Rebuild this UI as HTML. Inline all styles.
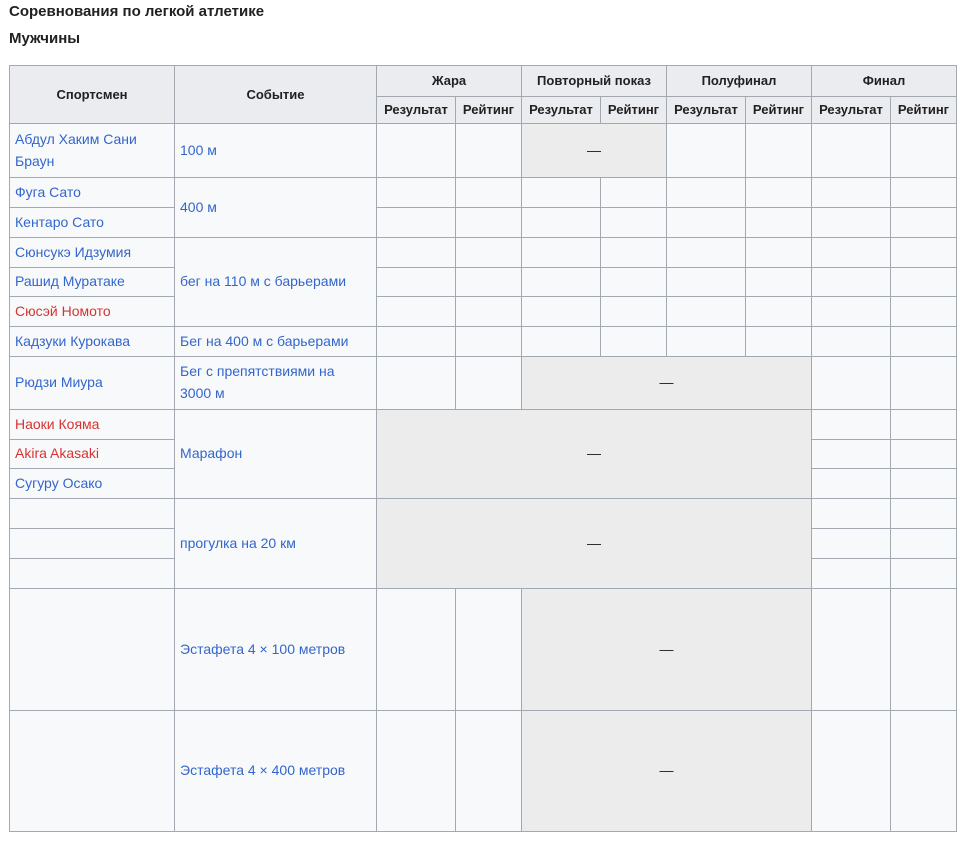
<!DOCTYPE html>
<html><head><meta charset="utf-8"><style>
body{margin:0;background:#fff;width:966px;height:846px;position:relative;font-family:"Liberation Sans",Arial,sans-serif;color:#202122;overflow:hidden}
.t{position:absolute;left:9px;font-weight:bold;font-size:15px}
.c{position:absolute;box-sizing:border-box;border:1px solid #a2a9b1;background:#f8f9fa;display:flex;align-items:center;padding:0 10px 2px 5px;font-size:14px;line-height:22px;color:#3366cc}
.h{background:#eaecf0;color:#202122;font-weight:bold;font-size:13px;justify-content:center;padding:0}
.g{background:#ececec;color:#202122;justify-content:center;padding:0 0 2px 0}
.r{color:#d73333}
</style></head><body>
<div class="t" style="top:3px">Соревнования по легкой атлетике</div>
<div class="t" style="top:30px">Мужчины</div>

<div class="c h" style="left:9px;top:65px;width:166px;height:59px">Спортсмен</div>
<div class="c h" style="left:174px;top:65px;width:203px;height:59px">Событие</div>
<div class="c h" style="left:376px;top:65px;width:146px;height:32px">Жара</div>
<div class="c h" style="left:521px;top:65px;width:146px;height:32px">Повторный показ</div>
<div class="c h" style="left:666px;top:65px;width:146px;height:32px">Полуфинал</div>
<div class="c h" style="left:811px;top:65px;width:146px;height:32px">Финал</div>
<div class="c h" style="left:376px;top:96px;width:80px;height:28px">Результат</div>
<div class="c h" style="left:455px;top:96px;width:67px;height:28px">Рейтинг</div>
<div class="c h" style="left:521px;top:96px;width:80px;height:28px">Результат</div>
<div class="c h" style="left:600px;top:96px;width:67px;height:28px">Рейтинг</div>
<div class="c h" style="left:666px;top:96px;width:80px;height:28px">Результат</div>
<div class="c h" style="left:745px;top:96px;width:67px;height:28px">Рейтинг</div>
<div class="c h" style="left:811px;top:96px;width:80px;height:28px">Результат</div>
<div class="c h" style="left:890px;top:96px;width:67px;height:28px">Рейтинг</div>

<div class="c" style="left:9px;top:123px;width:166px;height:55px">Абдул Хаким Сани Браун</div>
<div class="c" style="left:174px;top:123px;width:203px;height:55px">100 м</div>
<div class="c" style="left:376px;top:123px;width:80px;height:55px"></div>
<div class="c" style="left:455px;top:123px;width:67px;height:55px"></div>
<div class="c g" style="left:521px;top:123px;width:146px;height:55px">—</div>
<div class="c" style="left:666px;top:123px;width:80px;height:55px"></div>
<div class="c" style="left:745px;top:123px;width:67px;height:55px"></div>
<div class="c" style="left:811px;top:123px;width:80px;height:55px"></div>
<div class="c" style="left:890px;top:123px;width:67px;height:55px"></div>

<div class="c" style="left:9px;top:177px;width:166px;height:31px">Фуга Сато</div>
<div class="c" style="left:9px;top:207px;width:166px;height:31px">Кентаро Сато</div>
<div class="c" style="left:174px;top:177px;width:203px;height:61px">400 м</div>

<div class="c" style="left:9px;top:237px;width:166px;height:31px">Сюнсукэ Идзумия</div>
<div class="c" style="left:9px;top:267px;width:166px;height:30px">Рашид Муратаке</div>
<div class="c r" style="left:9px;top:296px;width:166px;height:31px">Сюсэй Номото</div>
<div class="c" style="left:174px;top:237px;width:203px;height:90px">бег на 110 м с барьерами</div>
<div class="c" style="left:9px;top:326px;width:166px;height:31px">Кадзуки Курокава</div>
<div class="c" style="left:174px;top:326px;width:203px;height:31px;padding-right:0">Бег на 400 м с барьерами</div>

<div class="c" style="left:376px;top:177px;width:80px;height:31px"></div><div class="c" style="left:455px;top:177px;width:67px;height:31px"></div><div class="c" style="left:521px;top:177px;width:80px;height:31px"></div><div class="c" style="left:600px;top:177px;width:67px;height:31px"></div><div class="c" style="left:666px;top:177px;width:80px;height:31px"></div><div class="c" style="left:745px;top:177px;width:67px;height:31px"></div><div class="c" style="left:811px;top:177px;width:80px;height:31px"></div><div class="c" style="left:890px;top:177px;width:67px;height:31px"></div>
<div class="c" style="left:376px;top:207px;width:80px;height:31px"></div><div class="c" style="left:455px;top:207px;width:67px;height:31px"></div><div class="c" style="left:521px;top:207px;width:80px;height:31px"></div><div class="c" style="left:600px;top:207px;width:67px;height:31px"></div><div class="c" style="left:666px;top:207px;width:80px;height:31px"></div><div class="c" style="left:745px;top:207px;width:67px;height:31px"></div><div class="c" style="left:811px;top:207px;width:80px;height:31px"></div><div class="c" style="left:890px;top:207px;width:67px;height:31px"></div>
<div class="c" style="left:376px;top:237px;width:80px;height:31px"></div><div class="c" style="left:455px;top:237px;width:67px;height:31px"></div><div class="c" style="left:521px;top:237px;width:80px;height:31px"></div><div class="c" style="left:600px;top:237px;width:67px;height:31px"></div><div class="c" style="left:666px;top:237px;width:80px;height:31px"></div><div class="c" style="left:745px;top:237px;width:67px;height:31px"></div><div class="c" style="left:811px;top:237px;width:80px;height:31px"></div><div class="c" style="left:890px;top:237px;width:67px;height:31px"></div>
<div class="c" style="left:376px;top:267px;width:80px;height:30px"></div><div class="c" style="left:455px;top:267px;width:67px;height:30px"></div><div class="c" style="left:521px;top:267px;width:80px;height:30px"></div><div class="c" style="left:600px;top:267px;width:67px;height:30px"></div><div class="c" style="left:666px;top:267px;width:80px;height:30px"></div><div class="c" style="left:745px;top:267px;width:67px;height:30px"></div><div class="c" style="left:811px;top:267px;width:80px;height:30px"></div><div class="c" style="left:890px;top:267px;width:67px;height:30px"></div>
<div class="c" style="left:376px;top:296px;width:80px;height:31px"></div><div class="c" style="left:455px;top:296px;width:67px;height:31px"></div><div class="c" style="left:521px;top:296px;width:80px;height:31px"></div><div class="c" style="left:600px;top:296px;width:67px;height:31px"></div><div class="c" style="left:666px;top:296px;width:80px;height:31px"></div><div class="c" style="left:745px;top:296px;width:67px;height:31px"></div><div class="c" style="left:811px;top:296px;width:80px;height:31px"></div><div class="c" style="left:890px;top:296px;width:67px;height:31px"></div>
<div class="c" style="left:376px;top:326px;width:80px;height:31px"></div><div class="c" style="left:455px;top:326px;width:67px;height:31px"></div><div class="c" style="left:521px;top:326px;width:80px;height:31px"></div><div class="c" style="left:600px;top:326px;width:67px;height:31px"></div><div class="c" style="left:666px;top:326px;width:80px;height:31px"></div><div class="c" style="left:745px;top:326px;width:67px;height:31px"></div><div class="c" style="left:811px;top:326px;width:80px;height:31px"></div><div class="c" style="left:890px;top:326px;width:67px;height:31px"></div>

<div class="c" style="left:9px;top:356px;width:166px;height:54px">Рюдзи Миура</div>
<div class="c" style="left:174px;top:356px;width:203px;height:54px;padding-right:30px">Бег с препятствиями на 3000 м</div>
<div class="c" style="left:376px;top:356px;width:80px;height:54px"></div>
<div class="c" style="left:455px;top:356px;width:67px;height:54px"></div>
<div class="c g" style="left:521px;top:356px;width:291px;height:54px">—</div>
<div class="c" style="left:811px;top:356px;width:80px;height:54px"></div>
<div class="c" style="left:890px;top:356px;width:67px;height:54px"></div>

<div class="c r" style="left:9px;top:409px;width:166px;height:31px">Наоки Кояма</div>
<div class="c r" style="left:9px;top:439px;width:166px;height:30px">Akira Akasaki</div>
<div class="c" style="left:9px;top:468px;width:166px;height:31px">Сугуру Осако</div>
<div class="c" style="left:174px;top:409px;width:203px;height:90px">Марафон</div>
<div class="c g" style="left:376px;top:409px;width:436px;height:90px">—</div>
<div class="c" style="left:811px;top:409px;width:80px;height:31px"></div><div class="c" style="left:890px;top:409px;width:67px;height:31px"></div>
<div class="c" style="left:811px;top:439px;width:80px;height:30px"></div><div class="c" style="left:890px;top:439px;width:67px;height:30px"></div>
<div class="c" style="left:811px;top:468px;width:80px;height:31px"></div><div class="c" style="left:890px;top:468px;width:67px;height:31px"></div>

<div class="c" style="left:9px;top:498px;width:166px;height:31px"></div>
<div class="c" style="left:9px;top:528px;width:166px;height:31px"></div>
<div class="c" style="left:9px;top:558px;width:166px;height:31px"></div>
<div class="c" style="left:174px;top:498px;width:203px;height:91px">прогулка на 20 км</div>
<div class="c g" style="left:376px;top:498px;width:436px;height:91px">—</div>
<div class="c" style="left:811px;top:498px;width:80px;height:31px"></div><div class="c" style="left:890px;top:498px;width:67px;height:31px"></div>
<div class="c" style="left:811px;top:528px;width:80px;height:31px"></div><div class="c" style="left:890px;top:528px;width:67px;height:31px"></div>
<div class="c" style="left:811px;top:558px;width:80px;height:31px"></div><div class="c" style="left:890px;top:558px;width:67px;height:31px"></div>

<div class="c" style="left:9px;top:588px;width:166px;height:123px"></div>
<div class="c" style="left:174px;top:588px;width:203px;height:123px">Эстафета 4 × 100 метров</div>
<div class="c" style="left:376px;top:588px;width:80px;height:123px"></div>
<div class="c" style="left:455px;top:588px;width:67px;height:123px"></div>
<div class="c g" style="left:521px;top:588px;width:291px;height:123px">—</div>
<div class="c" style="left:811px;top:588px;width:80px;height:123px"></div>
<div class="c" style="left:890px;top:588px;width:67px;height:123px"></div>

<div class="c" style="left:9px;top:710px;width:166px;height:122px"></div>
<div class="c" style="left:174px;top:710px;width:203px;height:122px">Эстафета 4 × 400 метров</div>
<div class="c" style="left:376px;top:710px;width:80px;height:122px"></div>
<div class="c" style="left:455px;top:710px;width:67px;height:122px"></div>
<div class="c g" style="left:521px;top:710px;width:291px;height:122px">—</div>
<div class="c" style="left:811px;top:710px;width:80px;height:122px"></div>
<div class="c" style="left:890px;top:710px;width:67px;height:122px"></div>
</body></html>
